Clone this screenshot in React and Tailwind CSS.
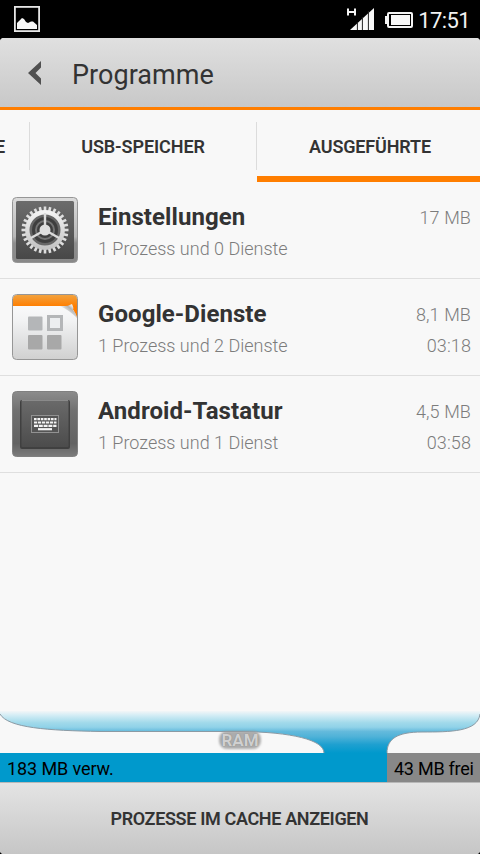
import React from "react";

const TEETH = Array.from({ length: 28 }, (_, i) => (i * 360) / 28);

function SettingsIcon() {
  return (
    <svg width="66" height="66" viewBox="0 0 66 66">
      <defs>
        <linearGradient id="s-frame" x1="0" y1="0" x2="0" y2="1">
          <stop offset="0" stopColor="#dcdcdc" />
          <stop offset="0.6" stopColor="#b8b8b8" />
          <stop offset="0.7" stopColor="#8e8e8e" />
          <stop offset="1" stopColor="#888" />
        </linearGradient>
        <linearGradient id="s-bg" x1="0" y1="0" x2="0" y2="1">
          <stop offset="0" stopColor="#6c6c6c" />
          <stop offset="1" stopColor="#484848" />
        </linearGradient>
        <linearGradient id="s-gear" x1="0" y1="0" x2="0" y2="1">
          <stop offset="0" stopColor="#f2f2f2" />
          <stop offset="1" stopColor="#c4c4c4" />
        </linearGradient>
      </defs>
      <rect x="0.5" y="0.5" width="65" height="65" rx="4" fill="url(#s-frame)" stroke="#969696" />
      <rect x="4" y="4" width="58" height="58" rx="1.5" fill="url(#s-bg)" />
      <circle cx="33" cy="33" r="17" fill="#666" />
      <circle cx="33" cy="33" r="13" fill="#3e3e3e" />
      <g fill="#dedede">
        {TEETH.map((a) => (
          <rect key={a} x="31.7" y="9.5" width="2.6" height="6" transform={`rotate(${a} 33 33)`} />
        ))}
      </g>
      <circle cx="33" cy="33" r="17.7" fill="none" stroke="url(#s-gear)" strokeWidth="4.4" />
      <circle cx="33" cy="33" r="9" fill="none" stroke="#747474" strokeWidth="2" />
      <path d="M33 33V16M33 33L19 41M33 33L47 41" stroke="#dadada" strokeWidth="2.4" />
      <circle cx="33" cy="33" r="5.5" fill="#dedede" />
    </svg>
  );
}

function ServicesIcon() {
  return (
    <svg width="66" height="66" viewBox="0 0 66 66">
      <defs>
        <linearGradient id="g-bg" x1="0" y1="0" x2="0" y2="1">
          <stop offset="0" stopColor="#ffffff" />
          <stop offset="0.4" stopColor="#f2f3f4" />
          <stop offset="1" stopColor="#d0d0d0" />
        </linearGradient>
        <linearGradient id="g-top" x1="0" y1="0" x2="0" y2="1">
          <stop offset="0" stopColor="#f2a23e" />
          <stop offset="0.5" stopColor="#ff7e00" />
        </linearGradient>
        <linearGradient id="g-fold" x1="0" y1="1" x2="1" y2="0">
          <stop offset="0.3" stopColor="#ffffff" />
          <stop offset="0.65" stopColor="#b4b4b4" />
          <stop offset="0.8" stopColor="#eeeeee" />
        </linearGradient>
      </defs>
      <rect x="0.5" y="0.5" width="65" height="65" rx="4" fill="url(#g-bg)" />
      <path d="M1 12V5Q1 1 5 1H61Q65 1 65 5V24Q63 17 58 12Z" fill="url(#g-top)" />
      <path d="M48 12Q55 13 60 10Q62 14 61 16Q64 19 65 24Q57 16 48 12Z" fill="url(#g-fold)" />
      <rect x="0.5" y="0.5" width="65" height="65" rx="4" fill="none" stroke="#969696" />
      <rect x="16" y="22.5" width="14.5" height="14" rx="1" fill="#b4b6b8" />
      <rect x="36.5" y="22.5" width="13" height="13" fill="#eceef0" stroke="#b4b6b8" strokeWidth="3" />
      <rect x="16" y="41" width="14.5" height="14.5" rx="1" fill="#a8a8a8" />
      <rect x="35" y="41" width="14.5" height="14.5" rx="1" fill="#a8a8a8" />
    </svg>
  );
}

function KeyboardIcon() {
  return (
    <svg width="66" height="66" viewBox="0 0 66 66">
      <defs>
        <linearGradient id="k-frame" x1="0" y1="0" x2="0" y2="1">
          <stop offset="0" stopColor="#8c8c8c" />
          <stop offset="0.3" stopColor="#707070" />
          <stop offset="0.8" stopColor="#626262" />
          <stop offset="1" stopColor="#7c7c7c" />
        </linearGradient>
        <linearGradient id="k-key" x1="0" y1="0" x2="0" y2="1">
          <stop offset="0" stopColor="#6a6a6a" />
          <stop offset="1" stopColor="#4c4c4c" />
        </linearGradient>
      </defs>
      <rect x="0.5" y="0.5" width="65" height="65" rx="4" fill="url(#k-frame)" stroke="#808080" />
      <rect x="8" y="9" width="50" height="49" rx="2" fill="#404040" />
      <rect x="9.5" y="9" width="47" height="47" rx="1" fill="url(#k-key)" />
      <path d="M10 9.5H56" stroke="#8a8a8a" />
      <rect x="19.5" y="24.5" width="27" height="17" fill="#555" stroke="#929292" />
      <g stroke="#f4f4f4" strokeWidth="2.2">
        <path d="M22 28.2H44.5" strokeDasharray="2.6 0.8" />
        <path d="M22 31.5H44.5" strokeDasharray="3.2 0.8" />
        <path d="M22 34.8H44.5" strokeDasharray="4 0.8" />
        <path d="M26 38.2H40" />
      </g>
    </svg>
  );
}

const ROWS = [
  { icon: SettingsIcon, name: "Einstellungen", info: "1 Prozess und 0 Dienste", size: "17 MB", time: "" },
  { icon: ServicesIcon, name: "Google-Dienste", info: "1 Prozess und 2 Dienste", size: "8,1 MB", time: "03:18" },
  { icon: KeyboardIcon, name: "Android-Tastatur", info: "1 Prozess und 1 Dienst", size: "4,5 MB", time: "03:58" },
];

function StatusBar() {
  return (
    <div className="flex h-[38px] shrink-0 items-start justify-between pl-[14px] pr-[10px]">
      <svg className="mt-[6px]" width="26" height="26" viewBox="0 0 26 26">
        <rect x="0.9" y="0.9" width="24.2" height="24.2" fill="#000" stroke="#e6e6e6" strokeWidth="1.8" />
        <path d="M3 23V17L5 15L8 12L10 13L12 16L14 17L17 15.5H19L23 19V23Z" fill="#f8f8f8" />
      </svg>
      <div className="flex items-start">
        <svg className="mt-[8px]" width="66" height="22" viewBox="0 0 66 22">
          <path d="M1 0.5V7.5M8 0.5V7.5M1 4H8" fill="none" stroke="#f4f4f4" strokeWidth="2" />
          <path d="M3 22L27 0V22Z" fill="#f8f8f8" />
          <path d="M10.4 14V22M15.4 9V22M21.4 3V22" stroke="#222" strokeWidth="1" />
          <rect x="41" y="5" width="24" height="14" rx="1" fill="none" stroke="#f4f4f4" strokeWidth="2" />
          <rect x="44" y="7" width="19" height="10" fill="#f8f8f8" />
          <rect x="38" y="8" width="3" height="8" fill="#f4f4f4" />
        </svg>
        <span className="ml-[5px] mt-[7px] w-[52px] text-right text-[22px] leading-[28px] tracking-[-0.6px] text-[#f2f2f2]">17:51</span>
      </div>
    </div>
  );
}

function RamPanel() {
  return (
    <div className="shrink-0">
      <div className="relative h-[43px]">
        <svg className="block" width="480" height="43" viewBox="0 0 480 43">
          <defs>
            <linearGradient id="flow" gradientUnits="userSpaceOnUse" x1="0" y1="0" x2="0" y2="43">
              <stop offset="0.02" stopColor="#f4f6f7" />
              <stop offset="0.12" stopColor="#d4edf5" />
              <stop offset="0.3" stopColor="#a0d9ea" />
              <stop offset="0.4" stopColor="#90d2e8" />
              <stop offset="0.5" stopColor="#64badc" />
              <stop offset="0.62" stopColor="#4fb2d8" />
              <stop offset="0.8" stopColor="#1fa0d0" />
              <stop offset="1" stopColor="#0099cc" />
            </linearGradient>
          </defs>
          <path d="M0 1V4C8 18 48 20.5 100 21.5H240C292 22 324 30 324 43H387C387 29 397 22 422 22C450 22 478 22 480 4V1Z" fill="url(#flow)" />
          <path d="M0 4C8 18 48 20.5 100 21.5H240C292 22 324 30 324 43M387 43C387 29 397 22 422 22C450 22 478 22 480 4" fill="none" stroke="#8b9aa4" />
        </svg>
        <div className="absolute left-[218px] top-[20px] flex h-[20px] w-[44px] items-center justify-center">
          <div className="absolute inset-x-[1px] inset-y-[1px] rounded-[8px] bg-[#9a9a9a] opacity-80 blur-[1px]" />
          <span className="relative text-[17px] font-bold leading-[20px] text-[#d0d0d0] [text-shadow:0_0_1px_#777]">RAM</span>
        </div>
      </div>
      <div className="flex h-[29px] text-[18px] leading-[32px] text-black">
        <div className="w-[387px] bg-[#0099cc] pl-[7px]"><span className="tracking-[-0.1px]">183 MB verw.</span></div>
        <div className="flex-1 whitespace-nowrap bg-[#888] pl-[7px]"><span className="tracking-[-0.25px]">43 MB frei</span></div>
      </div>
    </div>
  );
}

export default function App() {
  return (
    <div className="flex h-[854px] w-[480px] flex-col overflow-hidden bg-black font-[Roboto,sans-serif] text-[#333]">
      <StatusBar />
      <div className="flex flex-1 flex-col overflow-hidden rounded-[4px] bg-[#f8f8f8]">
        <header className="flex h-[72px] shrink-0 items-center border-b-[3px] border-[#ff7e00] bg-linear-to-b from-[#e0e0e0] to-[#c8c8c8] pl-[28px]">
          <svg className="mt-px" width="14" height="24" viewBox="0 0 14 24">
            <path d="M13 0V6.5L7.5 12L13 17.5V24L0 12Z" fill="#505050" />
          </svg>
          <h1 className="ml-[30px] mt-[4px] text-[27px] leading-[32px] tracking-[0.05px]">Programme</h1>
        </header>
        <nav className="flex h-[72px] shrink-0 text-[18px] font-semibold">
          <div className="flex w-[29px] shrink-0 items-center"><span className="-ml-[5px]">E</span></div>
          <div className="mt-[12px] h-[48px] w-px shrink-0 bg-[#dcdcdc]" />
          <div className="flex w-[226px] shrink-0 items-center justify-center tracking-[-0.1px]">USB-SPEICHER</div>
          <div className="mt-[12px] h-[48px] w-px shrink-0 bg-[#dcdcdc]" />
          <div className="flex w-[226px] shrink-0 items-center justify-center border-b-[6px] border-[#ff7e00] pt-[6px] tracking-[-0.15px]">AUSGEFÜHRTE</div>
        </nav>
        <main className="flex-1">
          {ROWS.map(({ icon: Icon, name, info, size, time }) => (
            <div key={name} className="flex h-[97px] items-start border-b border-[#dfdfdf] pl-[12px] pr-[9px]">
              <div className="mt-[15px] size-[66px]"><Icon /></div>
              <div className="ml-[20px] mt-[19px] flex-1">
                <div className="text-[24px] font-bold leading-[32px] tracking-[0.06px]">{name}</div>
                <div className="text-[18px] font-light leading-[32px] text-[#7c7c7c]">{info}</div>
              </div>
              <div className="mt-[20px] text-right text-[18px] font-light leading-[32px] tracking-[0.1px] text-[#7c7c7c]">
                <div>{size}</div>
                <div className="-mt-px">{time}</div>
              </div>
            </div>
          ))}
        </main>
        <RamPanel />
        <button className="h-[72px] shrink-0 border-t border-[#b8b8b8] bg-linear-to-b from-[#e4e4e4] to-[#c6c6c6] pr-[1px] text-[18px] font-semibold tracking-[-0.35px]">
          PROZESSE IM CACHE ANZEIGEN
        </button>
      </div>
    </div>
  );
}
